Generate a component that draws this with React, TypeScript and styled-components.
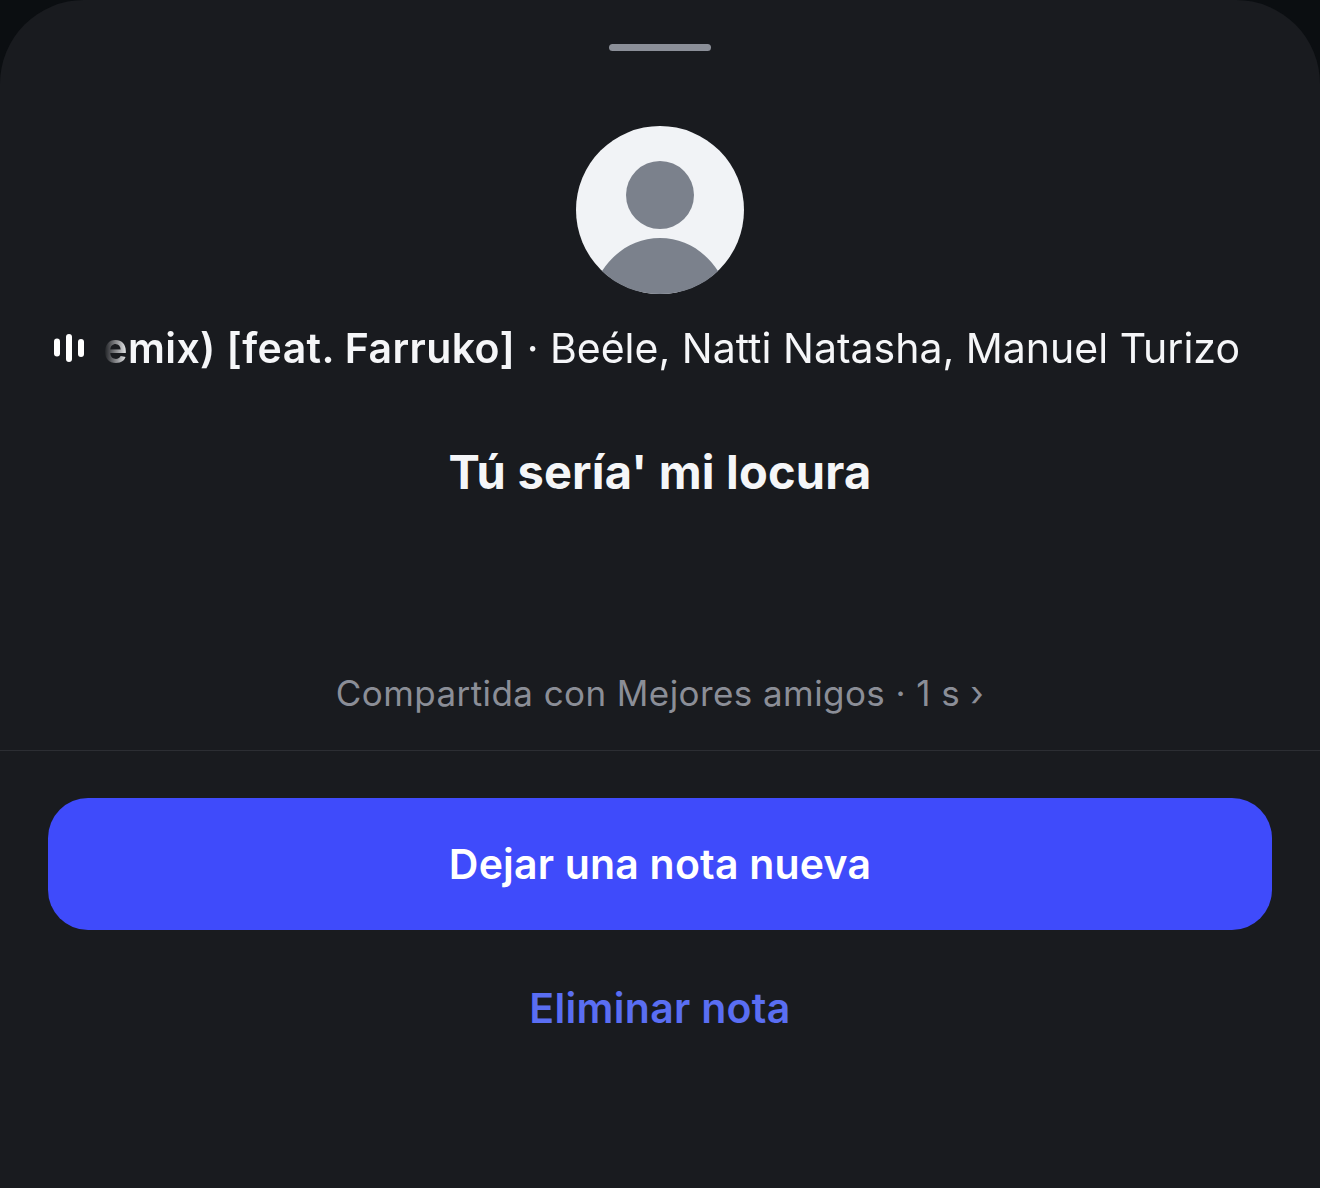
import React from 'react'
import styled, { createGlobalStyle } from 'styled-components'

const GlobalStyle = createGlobalStyle`
  html, body {
    margin: 0;
    padding: 0;
    background: #0b0e11;
  }
  * {
    box-sizing: border-box;
  }
`

const App = () => {
  return (
    <>
      <GlobalStyle />
      <Sheet>
        <Handle />
        <Avatar viewBox="0 0 168 168">
          <circle cx="84" cy="84" r="84" fill="#f1f3f6" />
          <circle cx="84" cy="69" r="34" fill="#7b818c" />
          <path d="M26 145 C40 124 60 112 84 112 C108 112 128 124 142 145 C127 160 106 168 84 168 C62 168 41 160 26 145 Z" fill="#7b818c" />
        </Avatar>
        <MusicRow>
          <WaveIcon viewBox="0 0 30 28">
            <rect x="0" y="4.5" width="6" height="18" rx="3" />
            <rect x="12" y="0" width="6" height="28" rx="3" />
            <rect x="24" y="5" width="6" height="18" rx="3" />
          </WaveIcon>
          <Ticker>
            <TickerText>
              <b>Otro Trago (Remix) [feat. Farruko]</b> · Beéle, Natti Natasha, Manuel Turizo
            </TickerText>
          </Ticker>
        </MusicRow>
        <NoteText>Tú sería' mi locura</NoteText>
        <SharedText>Compartida con Mejores amigos · 1 s ›</SharedText>
        <Divider />
        <Actions>
          <PrimaryButton>Dejar una nota nueva</PrimaryButton>
          <LinkButton>Eliminar nota</LinkButton>
        </Actions>
      </Sheet>
    </>
  )
}

export default App

const Sheet = styled.div`
  width: 1320px;
  height: 1188px;
  padding-top: 44px;
  background-color: #191b1f;
  border-radius: 84px 84px 0 0;
  display: flex;
  flex-direction: column;
  align-items: center;
  overflow: hidden;
  font-family: Inter, "Liberation Sans", sans-serif;
`
const Handle = styled.div`
  width: 102px;
  height: 7px;
  border-radius: 4px;
  background-color: #8b8f98;
`
const Avatar = styled.svg`
  width: 168px;
  height: 168px;
  margin-top: 75px;
  flex: none;
`
const MusicRow = styled.div`
  width: 100%;
  height: 50px;
  margin-top: 29px;
  padding: 0 0 0 54px;
  display: flex;
  align-items: center;
`
const WaveIcon = styled.svg`
  width: 30px;
  height: 28px;
  fill: #ffffff;
  flex: none;
`
const Ticker = styled.div`
  width: 1136px;
  margin-left: 20px;
  display: flex;
  justify-content: flex-end;
  overflow: hidden;
  white-space: nowrap;
  -webkit-mask-image: linear-gradient(to right, transparent 0, #000 24px);
  mask-image: linear-gradient(to right, transparent 0, #000 24px);
`
const TickerText = styled.div`
  font-size: 41px;
  line-height: 50px;
  color: #f5f6f8;
  flex: none;
  b {
    font-weight: 600;
    letter-spacing: 0.4px;
  }
`
const NoteText = styled.div`
  margin-top: 69px;
  font-size: 47px;
  line-height: 60px;
  font-weight: 700;
  letter-spacing: 0.2px;
  color: #f5f6f8;
`
const SharedText = styled.div`
  margin-top: 169px;
  font-size: 35px;
  line-height: 44px;
  letter-spacing: 0.42px;
  color: #8b8e97;
`
const Divider = styled.div`
  width: 100%;
  height: 1px;
  margin-top: 35px;
  background-color: #2c2e33;
`
const Actions = styled.div`
  width: 100%;
  padding: 47px 48px 0;
  display: flex;
  flex-direction: column;
  align-items: center;
`
const PrimaryButton = styled.button`
  width: 100%;
  height: 132px;
  border: none;
  border-radius: 40px;
  background-color: #3f4bfb;
  color: #ffffff;
  font-family: inherit;
  font-size: 41px;
  font-weight: 600;
  letter-spacing: 0.2px;
`
const LinkButton = styled.button`
  margin-top: 53px;
  padding: 0;
  border: none;
  background: none;
  color: #5a6ef2;
  font-family: inherit;
  font-size: 41px;
  line-height: 50px;
  font-weight: 600;
  letter-spacing: 0.3px;
`
